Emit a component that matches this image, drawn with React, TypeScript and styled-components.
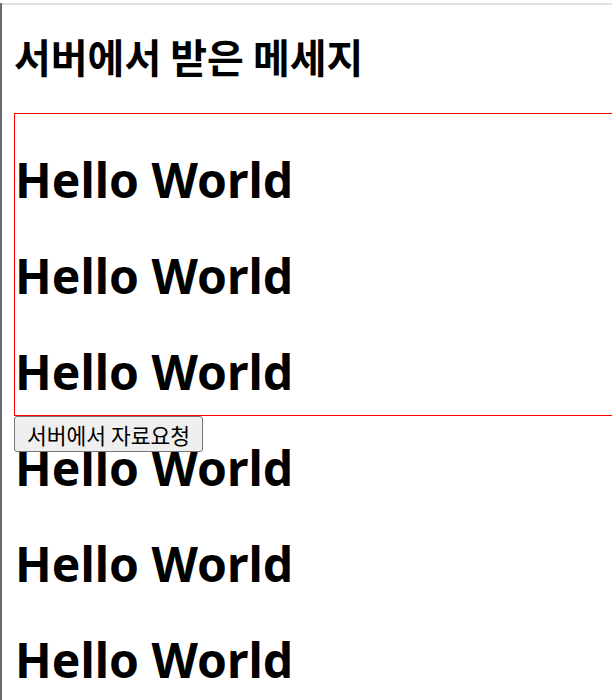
import React from "react";
import styled, { createGlobalStyle } from "styled-components";

const GlobalStyle = createGlobalStyle`
  html, body {
    margin: 0;
    padding: 0;
    background: #ffffff;
    overflow: hidden;
  }
  body {
    font-family: "Noto Sans", "Noto Sans CJK KR", sans-serif;
    color: #000000;
  }
`;

const Frame = styled.div`
  min-height: 700px;
  border-left: 2px solid #6b6b6b;
  box-sizing: border-box;
`;

const TopRule = styled.div`
  margin-top: 3px;
  height: 2px;
  background: #dee2e6;
`;

const Content = styled.main`
  padding-left: 12px;
`;

const Heading = styled.h2`
  margin: 27px 0 33px;
  font-family: "Noto Sans CJK KR", "Noto Sans", sans-serif;
  font-size: 40px;
  line-height: 48px;
  font-weight: 700;
  white-space: nowrap;
`;

const MessageBox = styled.div`
  height: 303px;
  box-sizing: border-box;
  padding-top: 2px;
  border: 1px solid #ff0000;
  border-right: 0;
`;

const Message = styled.h1`
  margin: 32px 0;
  font-family: "Noto Sans", "Noto Sans CJK KR", sans-serif;
  font-size: 48px;
  line-height: 64px;
  font-weight: 700;
  white-space: nowrap;
`;

const RequestButton = styled.button`
  display: inline-flex;
  align-items: center;
  height: 36px;
  margin: 0;
  padding: 0 12px;
  font-family: "Noto Sans CJK KR", "Noto Sans", sans-serif;
  font-size: 21.5px;
  color: #000000;
  background: #efefef;
  border: 1px solid #767676;
  border-radius: 3px;
  cursor: pointer;
`;

const messages = Array.from({ length: 6 }, () => "Hello World");

export default function App() {
  return (
    <>
      <GlobalStyle />
      <Frame>
        <TopRule />
        <Content>
          <Heading>서버에서 받은 메세지</Heading>
          <MessageBox>
            {messages.map((m, i) => (
              <Message key={i}>{m}</Message>
            ))}
          </MessageBox>
          <RequestButton type="button">서버에서 자료요청</RequestButton>
        </Content>
      </Frame>
    </>
  );
}
